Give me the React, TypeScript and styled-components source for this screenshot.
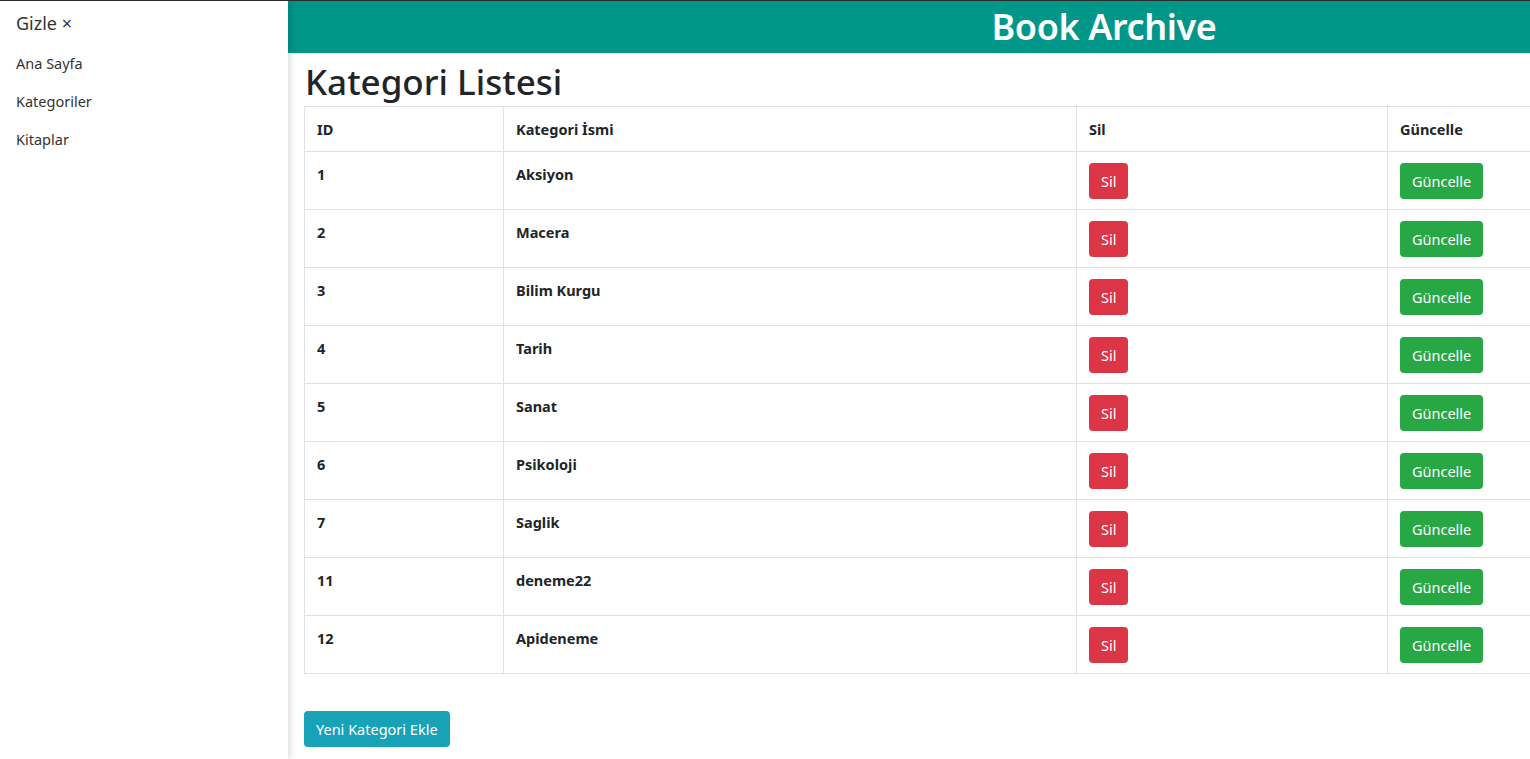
import React from "react";
import styled, { createGlobalStyle } from "styled-components";

const GlobalStyle = createGlobalStyle`
  html, body {
    margin: 0;
    padding: 0;
    height: 100%;
    overflow: hidden;
    font-family: "Noto Sans", "Open Sans", sans-serif;
    color: #212529;
    background: #fff;
  }
  #root {
    height: 100%;
  }
  * {
    box-sizing: border-box;
  }
`;

const Page = styled.div`
  display: flex;
  height: 100%;
  border-top: 1px solid #2b2b2b;
  overflow: hidden;
`;

const Sidebar = styled.aside`
  width: 288px;
  flex-shrink: 0;
  background: #fff;
  box-shadow: 3px 0 6px rgba(0, 0, 0, 0.12);
  position: relative;
  z-index: 1;
  padding: 10px 16px;

  .sidebar__toggle {
    font-size: 18px;
    line-height: 24px;
    color: #333;
    margin-bottom: 18px;
  }

  .sidebar__link {
    display: block;
    font-size: 14.5px;
    line-height: 20px;
    color: #333;
    text-decoration: none;
    margin-bottom: 18px;
  }
`;

const Main = styled.main`
  width: 1632px;
  flex-shrink: 0;
`;

const TopBar = styled.header`
  height: 52px;
  background: #009688;
  display: flex;
  align-items: center;
  justify-content: center;

  h2 {
    margin: 0;
    color: #fff;
    font-size: 36px;
    font-weight: 600;
    line-height: 1;
    letter-spacing: -0.4px;
  }
`;

const Content = styled.div`
  padding: 0 16px;

  h1 {
    margin: 4px 0 0 1px;
    font-size: 35px;
    font-weight: 500;
    line-height: 49px;
  }
`;

const Table = styled.table`
  border-collapse: collapse;
  table-layout: fixed;
  width: 1320px;
  font-size: 14.5px;
  font-weight: 700;

  th,
  td {
    border: 1px solid #dee2e6;
    padding: 11px 12px 0;
    text-align: left;
    vertical-align: top;
    line-height: 22px;
  }

  th {
    height: 45px;
  }

  td {
    height: 58px;
  }
`;

const Button = styled.button<{ $variant: "danger" | "success" | "info" }>`
  display: inline-block;
  height: 36px;
  padding: 0 12px;
  border: none;
  border-radius: 4px;
  font-family: inherit;
  font-size: 14.5px;
  font-weight: 400;
  color: #fff;
  cursor: pointer;
  background: ${(p) =>
    p.$variant === "danger"
      ? "#dc3545"
      : p.$variant === "success"
      ? "#28a745"
      : "#17a2b8"};
`;

const Actions = styled.div`
  margin-top: 37px;
`;

const categories = [
  { id: 1, name: "Aksiyon" },
  { id: 2, name: "Macera" },
  { id: 3, name: "Bilim Kurgu" },
  { id: 4, name: "Tarih" },
  { id: 5, name: "Sanat" },
  { id: 6, name: "Psikoloji" },
  { id: 7, name: "Saglik" },
  { id: 11, name: "deneme22" },
  { id: 12, name: "Apideneme" },
];

const App = () => {
  return (
    <>
      <GlobalStyle />
      <Page>
        <Sidebar>
          <div className="sidebar__toggle">Gizle ×</div>
          <a className="sidebar__link" href="#">
            Ana Sayfa
          </a>
          <a className="sidebar__link" href="#">
            Kategoriler
          </a>
          <a className="sidebar__link" href="#">
            Kitaplar
          </a>
        </Sidebar>
        <Main>
          <TopBar>
            <h2>Book Archive</h2>
          </TopBar>
          <Content>
            <h1>Kategori Listesi</h1>
            <Table>
              <colgroup>
                <col style={{ width: 199 }} />
                <col style={{ width: 573 }} />
                <col style={{ width: 311 }} />
                <col />
              </colgroup>
              <thead>
                <tr>
                  <th>ID</th>
                  <th>Kategori İsmi</th>
                  <th>Sil</th>
                  <th>Güncelle</th>
                </tr>
              </thead>
              <tbody>
                {categories.map((c) => (
                  <tr key={c.id}>
                    <td>{c.id}</td>
                    <td>{c.name}</td>
                    <td>
                      <Button $variant="danger">Sil</Button>
                    </td>
                    <td>
                      <Button $variant="success">Güncelle</Button>
                    </td>
                  </tr>
                ))}
              </tbody>
            </Table>
            <Actions>
              <Button $variant="info">Yeni Kategori Ekle</Button>
            </Actions>
          </Content>
        </Main>
      </Page>
    </>
  );
};

export default App;
